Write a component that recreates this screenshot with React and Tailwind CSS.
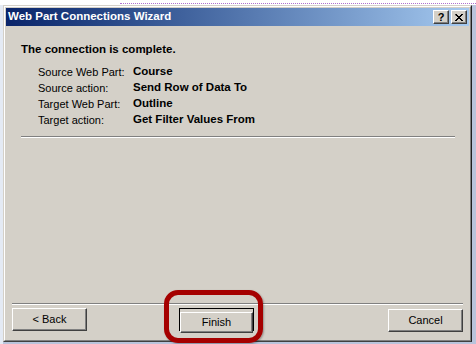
import React from "react";

const rows = [
    { label: "Source Web Part:", value: "Course" },
    { label: "Source action:", value: "Send Row of Data To" },
    { label: "Target Web Part:", value: "Outline" },
    { label: "Target action:", value: "Get Filter Values From" },
];

// classic win2k raised bevel
const bevel =
    "border border-t-white border-l-white border-r-[#404040] border-b-[#404040] shadow-[inset_-1px_-1px_0_#808080]";

const WizButton = ({ children, isDefault }) => {
    if (isDefault) {
        return (
            <div className="w-[75px] h-[23px] border border-black">
                <button className={`w-full h-full bg-[#d4d0c8] text-[11px] text-black ${bevel}`}>
                    {children}
                </button>
            </div>
        );
    }
    return (
        <button className={`w-[75px] h-[23px] bg-[#d4d0c8] text-[11px] text-black ${bevel}`}>
            {children}
        </button>
    );
};

const App = () => {
    return (
        <div className="relative w-[476px] h-[344px] overflow-hidden bg-[#b9c4dc] font-['Liberation_Sans',Arial,sans-serif] text-black">
            {/* page behind the dialog */}
            <div className="h-[5px] bg-white flex flex-col">
                <div className="h-[3px]" />
                <div className="ml-[120px] border-t border-dotted border-[#b070d0]" />
            </div>

            <div className="flex h-[339px]">
                <div className="w-[3px] bg-[#e4eaf4]" />

                {/* dialog window */}
                <div className="w-[469px] h-[337px] flex flex-col bg-[#d4d0c8] border-t border-l border-t-[#d4d0c8] border-l-[#d4d0c8] border-r border-b border-r-[#202020] border-b-[#404040]">
                    <div className="flex-1 flex flex-col border-t border-l border-t-white border-l-white border-r border-b border-r-[#808080] border-b-[#808080] p-px">
                        {/* title bar */}
                        <div className="h-[18px] flex items-center bg-gradient-to-r from-[#0a246a] to-[#a6caf0] pl-[2px] pr-[2px]">
                            <span className="text-white font-bold text-[11.5px] leading-none">
                                Web Part Connections Wizard
                            </span>
                            <div className="ml-auto flex gap-[2px]">
                                <div className={`w-[16px] h-[14px] bg-[#d4d0c8] flex items-center justify-center text-[11px] font-bold leading-none ${bevel}`}>
                                    ?
                                </div>
                                <div className={`w-[16px] h-[14px] bg-[#d4d0c8] flex items-center justify-center ${bevel}`}>
                                    <svg width="8" height="7" viewBox="0 0 8 7">
                                        <path d="M0 0h2v1h1v1h2v-1h1v-1h2v1h-1v1h-1v1h-1v1h1v1h1v1h1v1h-2v-1h-1v-1h-2v1h-1v1h-2v-1h1v-1h1v-1h1v-1h-1v-1h-1z" fill="#000" />
                                    </svg>
                                </div>
                            </div>
                        </div>

                        {/* body */}
                        <div className="flex-1 flex flex-col">
                            <div className="pl-[15px] pr-[14px] pt-[16px]">
                                <div className="text-[11.5px] font-bold leading-[14px]">The connection is complete.</div>
                                <div className="mt-[8px] pl-[17px] flex flex-col">
                                    {rows.map((r) => (
                                        <div key={r.label} className="flex h-[16px] items-center">
                                            <span className="w-[95px] text-[11px]">{r.label}</span>
                                            <span className="text-[11.5px] font-bold">{r.value}</span>
                                        </div>
                                    ))}
                                </div>
                                <div className="mt-[8px] border-t border-[#808080] border-b border-b-white" />
                            </div>

                            <div className="flex-1" />

                            <div className="px-[6px] pb-[7px]">
                                <div className="border-t border-[#808080] border-b border-b-white" />
                                <div className="mt-[2px] flex items-center">
                                    <WizButton>&lt; Back</WizButton>
                                    <div className="ml-[92px]">
                                        <WizButton isDefault>Finish</WizButton>
                                    </div>
                                    <div className="ml-auto">
                                        <WizButton>Cancel</WizButton>
                                    </div>
                                </div>
                            </div>
                        </div>
                    </div>
                </div>

                <div className="flex-1 bg-[#b9c4dc]" />
            </div>

            {/* red highlight annotation */}
            <div className="absolute left-[164px] top-[290px] w-[99px] h-[53px] rounded-[14px] border-[5px] border-[#a50000] shadow-[1px_1px_2px_rgba(0,0,0,0.3)]" />
        </div>
    );
};

export default App;
